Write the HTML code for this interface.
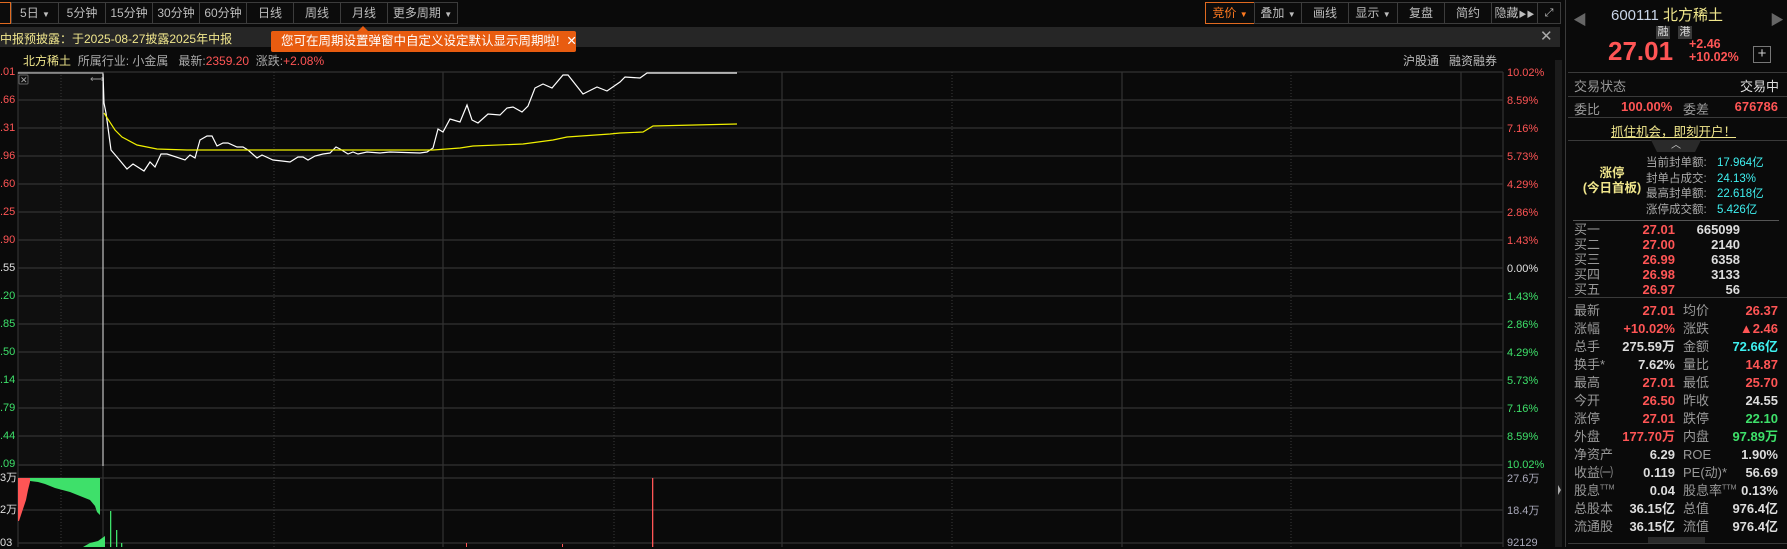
<!DOCTYPE html>
<html><head><meta charset="utf-8"><style>
*{margin:0;padding:0;box-sizing:border-box}
body{width:1787px;height:547px;background:#0a0a0a;overflow:hidden;position:relative;font-family:"Liberation Sans","WenQuanYi Zen Hei","Noto Sans CJK SC",sans-serif;font-size:12px;color:#c8c8c8}
.a{position:absolute;white-space:nowrap}
.btn{position:absolute;top:2px;height:22px;border:1px solid #3c3c3c;color:#bdbdbd;font-size:12px;line-height:20px;text-align:center;background:#0c0c0c}
.r{color:#ff5555}.g{color:#3ee06a}.y{color:#f0e68c}.c{color:#3ff0f0}.w{color:#e0e0e0}
.ax{position:absolute;font-size:11px;line-height:11px}
.hl{position:absolute;height:1px;background:#3a3a3a}
</style></head><body>
<div class="btn" style="left:-2px;width:13px;border-color:#e06a20"></div>
<div class="btn" style="left:11px;width:48px">5日 <span style="font-size:8px">▼</span></div>
<div class="btn" style="left:58px;width:48px">5分钟</div>
<div class="btn" style="left:105px;width:48px">15分钟</div>
<div class="btn" style="left:152px;width:48px">30分钟</div>
<div class="btn" style="left:199px;width:48px">60分钟</div>
<div class="btn" style="left:246px;width:48px">日线</div>
<div class="btn" style="left:293px;width:48px">周线</div>
<div class="btn" style="left:340px;width:48px">月线</div>
<div class="btn" style="left:387px;width:71px">更多周期 <span style="font-size:8px">▼</span></div>
<div class="btn" style="left:1205px;width:50px;border-color:#e06a20;color:#ff7a20">竞价 <span style="font-size:8px">▼</span></div>
<div class="btn" style="left:1254px;width:48px">叠加 <span style="font-size:8px">▼</span></div>
<div class="btn" style="left:1301px;width:48px">画线</div>
<div class="btn" style="left:1348px;width:50px">显示 <span style="font-size:8px">▼</span></div>
<div class="btn" style="left:1397px;width:48px">复盘</div>
<div class="btn" style="left:1444px;width:48px">简约</div>
<div class="btn" style="left:1491px;width:47px">隐藏<span style="font-size:8px">▶▶</span></div>
<div class="btn" style="left:1537px;width:24px;font-size:11px">⤢</div>
<div class="a" style="left:0;top:27px;width:1560px;height:20px;background:#262626"></div>
<div class="a y" style="left:0;top:30px;font-size:12px">中报预披露：于2025-08-27披露2025年中报</div>
<div class="a" style="left:1540px;top:27px;font-size:15px;color:#aaa">✕</div>
<div class="a" style="left:271px;top:31px;width:305px;height:21px;background:#e85c10;border-radius:2px;color:#fff;font-size:12.5px;line-height:21px;padding-left:10px">您可在周期设置弹窗中自定义设定默认显示周期啦! &nbsp;✕</div>
<div class="a" style="left:357px;top:26px;width:0;height:0;border-left:6px solid transparent;border-right:6px solid transparent;border-bottom:6px solid #e85c10"></div>
<div class="a" style="left:23px;top:52px;font-size:12px"><span class="y">北方稀土</span> &nbsp;<span style="color:#aaa">所属行业: 小金属 &nbsp; 最新:</span><span class="r">2359.20</span> &nbsp;<span style="color:#aaa">涨跌:</span><span class="r">+2.08%</span></div>
<div class="a" style="left:1403px;top:52px;color:#bbb">沪股通 &nbsp; 融资融券</div>
<svg class="a" style="left:0;top:0" width="1562" height="547">
<rect x="18" y="72" width="85" height="394" fill="#0f0f0f"/>
<g stroke="#333" stroke-width="1.2">
<line x1="18" y1="72" x2="1503" y2="72"/><line x1="18" y1="100" x2="1503" y2="100"/><line x1="18" y1="128" x2="1503" y2="128"/><line x1="18" y1="156" x2="1503" y2="156"/><line x1="18" y1="184" x2="1503" y2="184"/><line x1="18" y1="212" x2="1503" y2="212"/><line x1="18" y1="240" x2="1503" y2="240"/><line x1="18" y1="268" x2="1503" y2="268"/><line x1="18" y1="296" x2="1503" y2="296"/><line x1="18" y1="324" x2="1503" y2="324"/><line x1="18" y1="352" x2="1503" y2="352"/><line x1="18" y1="380" x2="1503" y2="380"/><line x1="18" y1="408" x2="1503" y2="408"/><line x1="18" y1="436" x2="1503" y2="436"/><line x1="18" y1="465" x2="1503" y2="465"/>
<line x1="18" y1="478" x2="1503" y2="478"/><line x1="18" y1="510" x2="1503" y2="510"/><line x1="18" y1="543" x2="1503" y2="543"/>
<line x1="18" y1="72" x2="18" y2="547"/><line x1="103" y1="72" x2="103" y2="547"/><line x1="443" y1="72" x2="443" y2="547"/><line x1="782" y1="72" x2="782" y2="547"/><line x1="1122" y1="72" x2="1122" y2="547"/><line x1="1461" y1="72" x2="1461" y2="547"/><line x1="1503" y1="72" x2="1503" y2="547"/>
</g>
<g stroke="#3a3a3a" stroke-dasharray="1,2">
<line x1="61" y1="72" x2="61" y2="547"/><line x1="274" y1="72" x2="274" y2="547"/><line x1="614" y1="72" x2="614" y2="547"/><line x1="952" y1="72" x2="952" y2="547"/><line x1="1291" y1="72" x2="1291" y2="547"/>
</g>
<path d="M18 73H103V466" fill="none" stroke="#ddd" stroke-width="1"/>
<rect x="19" y="75" width="9" height="9" fill="none" stroke="#666" rx="1"/>
<text x="20" y="83" font-size="9" fill="#aaa">✕</text>
<text x="90" y="82" font-size="10" fill="#999">⟷</text>
<polyline fill="none" stroke="#fff" stroke-width="1.2" points="103,74 104,103 106,113 111,150 117,157 127,169 133,164 144,171 150,162 155,167 161,154 167,154 185,160 190,155 195,158 200,140 207,136 212,136 217,146 223,143 228,143 237,147 243,147 248,150 257,158 262,155 273,160 282,161 290,162 298,157 303,157 308,160 315,156 323,154 330,153 336,147 340,149 348,154 353,152 358,154 367,152 380,153 390,152 420,153 427,152 433,148 438,129 443,132 450,119 460,122 467,105 472,120 478,123 488,114 500,115 507,108 513,107 522,112 528,106 535,88 543,84 552,88 563,75 568,75 583,94 597,87 607,91 620,82 625,77 640,78 647,73 737,73"/>
<polyline fill="none" stroke="#f0f000" stroke-width="1.2" points="104,113 115,130 122,137 137,145 157,149 187,150 323,150 433,150 460,148 473,146 523,144 553,140 567,137 610,134 620,133 643,132 653,126 737,124"/>
<path d="M18 478H30V482L28 490L26 500L22 512L19 521H18Z" fill="#ff5555"/>
<path d="M30 478H100V515L97 512L95 506L90 500L80 496L70 492L55 488L45 484L38 482L30 481Z" fill="#3ee06a"/>
<path d="M83 547L90 543L98 541L105 536V547Z" fill="#3ee06a"/>
<rect x="110" y="511" width="1.3" height="36" fill="#3ee06a"/><rect x="116" y="530" width="1.3" height="17" fill="#3ee06a"/><rect x="121" y="543" width="1.3" height="4" fill="#3ee06a"/>
<rect x="466" y="543" width="1" height="4" fill="#ff5555"/><rect x="562" y="544" width="1" height="3" fill="#ff5555"/><rect x="652" y="478" width="1.3" height="69" fill="#ff5555"/>
<rect x="1555" y="60" width="7" height="487" fill="#1c1c1c"/>
<path d="M1558 485L1561 490L1558 495Z" fill="#aaa"/>
</svg>
<div class="ax r" style="left:0;top:67px">.01</div><div class="ax r" style="left:0;top:95px">.66</div><div class="ax r" style="left:0;top:123px">.31</div><div class="ax r" style="left:0;top:151px">.96</div><div class="ax r" style="left:0;top:179px">.60</div><div class="ax r" style="left:0;top:207px">.25</div><div class="ax r" style="left:0;top:235px">.90</div><div class="ax w" style="left:0;top:263px">.55</div><div class="ax g" style="left:0;top:291px">.20</div><div class="ax g" style="left:0;top:319px">.85</div><div class="ax g" style="left:0;top:347px">.50</div><div class="ax g" style="left:0;top:375px">.14</div><div class="ax g" style="left:0;top:403px">.79</div><div class="ax g" style="left:0;top:431px">.44</div><div class="ax g" style="left:0;top:459px">.09</div>
<div class="ax w" style="left:0;top:473px">3万</div><div class="ax w" style="left:0;top:505px">2万</div><div class="ax w" style="left:0;top:538px">03</div>
<div class="ax r" style="left:1507px;top:68px">10.02%</div><div class="ax r" style="left:1507px;top:96px">8.59%</div><div class="ax r" style="left:1507px;top:124px">7.16%</div><div class="ax r" style="left:1507px;top:152px">5.73%</div><div class="ax r" style="left:1507px;top:180px">4.29%</div><div class="ax r" style="left:1507px;top:208px">2.86%</div><div class="ax r" style="left:1507px;top:236px">1.43%</div><div class="ax w" style="left:1507px;top:264px">0.00%</div><div class="ax g" style="left:1507px;top:292px">1.43%</div><div class="ax g" style="left:1507px;top:320px">2.86%</div><div class="ax g" style="left:1507px;top:348px">4.29%</div><div class="ax g" style="left:1507px;top:376px">5.73%</div><div class="ax g" style="left:1507px;top:404px">7.16%</div><div class="ax g" style="left:1507px;top:432px">8.59%</div><div class="ax g" style="left:1507px;top:460px">10.02%</div>
<div class="ax" style="left:1507px;top:474px;color:#aab">27.6万</div><div class="ax" style="left:1507px;top:506px;color:#aab">18.4万</div><div class="ax" style="left:1507px;top:538px;color:#aab">92129</div>
<div class="a" style="left:1565px;top:0;width:1px;height:547px;background:#3a3a3a"></div>
<div class="a" style="left:1573px;top:10px;color:#666;font-size:14px">◀</div>
<div class="a" style="left:1770px;top:10px;color:#666;font-size:14px">▶</div>
<div class="a" style="left:1611px;top:4px;font-size:15px"><span style="color:#c8d4e8">600111</span> <span class="y">北方稀土</span></div>
<div class="a" style="left:1656px;top:26px;width:14px;height:13px;background:#3a3a3a;color:#ddd;font-size:11px;line-height:13px;text-align:center">融</div>
<div class="a" style="left:1678px;top:26px;width:14px;height:13px;background:#3a3a3a;color:#ddd;font-size:11px;line-height:13px;text-align:center">港</div>
<div class="a r" style="left:1608px;top:36px;font-size:26px;font-weight:bold">27.01</div>
<div class="a r" style="left:1689px;top:38px;font-size:12.5px;font-weight:bold;line-height:13px">+2.46<br>+10.02%</div>
<div class="a" style="left:1753px;top:46px;width:18px;height:17px;border:1px solid #777;color:#ccc;font-size:15px;line-height:14px;text-align:center">+</div>
<div class="hl" style="left:1568px;top:72px;width:219px"></div>
<div class="a" style="left:1574px;top:76px;font-size:13px;color:#999">交易状态</div>
<div class="a" style="left:1740px;top:76px;font-size:13px;color:#ddd">交易中</div>
<div class="hl" style="left:1568px;top:96px;width:219px"></div>
<div class="a" style="left:1574px;top:99px;font-size:13px;color:#999">委比</div>
<div class="a r" style="left:1621px;top:99px;font-size:13px;font-weight:bold">100.00%</div>
<div class="a" style="left:1683px;top:99px;font-size:13px;color:#999">委差</div>
<div class="a r" style="left:1730px;top:99px;width:48px;text-align:right;font-size:13px;font-weight:bold">676786</div>
<div class="hl" style="left:1568px;top:117px;width:219px"></div>
<div class="a y" style="left:1611px;top:121px;font-size:12.5px;text-decoration:underline">抓住机会，即刻开户！</div>
<div class="hl" style="left:1568px;top:140px;width:219px"></div>
<div class="a" style="left:1651px;top:140px;width:50px;height:12px;background:#2a2a2a;color:#ccc;font-size:10px;text-align:center;line-height:12px;clip-path:polygon(0 0,100% 0,88% 100%,12% 100%)">︿</div>
<div class="a y" style="left:1578px;top:166px;font-weight:bold;font-size:12.5px;text-align:center;line-height:15px;width:68px">涨停<br>(今日首板)</div>
<div class="a" style="left:1646px;top:156px;font-size:11.5px;line-height:15.7px;color:#aaa">当前封单额:<br>封单占成交:<br>最高封单额:<br>涨停成交额:</div>
<div class="a c" style="left:1717px;top:156px;font-size:11.5px;line-height:15.7px">17.964亿<br>24.13%<br>22.618亿<br>5.426亿</div>
<div class="hl" style="left:1573px;top:220px;width:206px;background:#555"></div>
<div class="a" style="left:1574px;top:222px;font-size:13px;line-height:15px;color:#999">买一<br>买二<br>买三<br>买四<br>买五</div>
<div class="a r" style="left:1620px;top:222px;width:55px;text-align:right;font-size:13px;line-height:15px;font-weight:bold">27.01<br>27.00<br>26.99<br>26.98<br>26.97</div>
<div class="a" style="left:1680px;top:222px;width:60px;text-align:right;font-size:13px;line-height:15px;font-weight:bold;color:#ddd">665099<br>2140<br>6358<br>3133<br>56</div>
<div class="hl" style="left:1568px;top:297px;width:219px"></div>
<div class="a" style="left:1574px;top:302px;font-size:13px;line-height:18px;color:#999">最新<br>涨幅<br>总手<br>换手*<br>最高<br>今开<br>涨停<br>外盘<br>净资产<br>收益㈠<br>股息<sup style="font-size:7px;line-height:0">TTM</sup><br>总股本<br>流通股</div>
<div class="a" style="left:1605px;top:302px;width:70px;text-align:right;font-size:13px;line-height:18px;font-weight:bold;color:#ddd"><span class="r">27.01</span><br><span class="r">+10.02%</span><br>275.59万<br>7.62%<br><span class="r">27.01</span><br><span class="r">26.50</span><br><span class="r">27.01</span><br><span class="r">177.70万</span><br>6.29<br>0.119<br>0.04<br>36.15亿<br>36.15亿</div>
<div class="a" style="left:1683px;top:302px;font-size:13px;line-height:18px;color:#999">均价<br>涨跌<br>金额<br>量比<br>最低<br>昨收<br>跌停<br>内盘<br>ROE<br>PE(动)*<br>股息率<sup style="font-size:7px;line-height:0">TTM</sup><br>总值<br>流值</div>
<div class="a" style="left:1700px;top:302px;width:78px;text-align:right;font-size:13px;line-height:18px;font-weight:bold;color:#ddd"><span class="r">26.37</span><br><span class="r">▲2.46</span><br><span class="c">72.66亿</span><br><span class="r">14.87</span><br><span class="r">25.70</span><br>24.55<br><span class="g">22.10</span><br><span class="g">97.89万</span><br>1.90%<br>56.69<br>0.13%<br>976.4亿<br>976.4亿</div>
<div class="hl" style="left:1568px;top:543px;width:219px"></div>
<div class="a" style="left:1648px;top:537px;width:57px;height:6px;background:#2a2a2a"></div>
</body></html>
